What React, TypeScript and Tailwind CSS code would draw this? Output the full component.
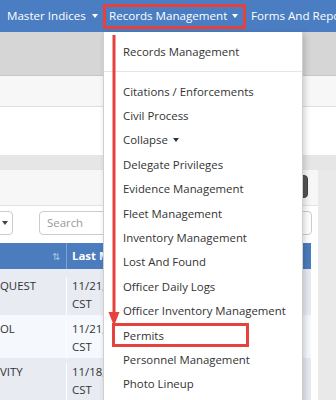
import React from "react";

const menuItems = [
  "Citations / Enforcements",
  "Civil Process",
  "Collapse",
  "Delegate Privileges",
  "Evidence Management",
  "Fleet Management",
  "Inventory Management",
  "Lost And Found",
  "Officer Daily Logs",
  "Officer Inventory Management",
  "Permits",
  "Personnel Management",
  "Photo Lineup",
];

const rows = [
  { name: "QUEST", date: "11/21,", bg: "bg-[#e8ebf2]", pad: "h-[46px] pt-[8px]" },
  { name: "OL", date: "11/21,", bg: "bg-[#f5f8fc]", pad: "h-[43px] pt-[5px]" },
  { name: "VITY", date: "11/18,", bg: "bg-[#e8ebf2]", pad: "h-[43px] pt-[5px]" },
];

function Caret({ className = "" }: { className?: string }) {
  return (
    <span
      className={`inline-block h-0 w-0 border-x-[3.5px] border-t-[4px] border-x-transparent border-t-current ${className}`}
    />
  );
}

export default function App() {
  return (
    <div className="relative h-[400px] w-[336px] overflow-hidden bg-[#e9e9e9] font-['Open_Sans','Noto_Sans',sans-serif] text-[11.4px] text-[#333]">
      <nav className="flex h-[32px] items-center overflow-hidden whitespace-nowrap bg-[#4a7dc1] text-[11.6px] text-white">
        <span className="ml-[7px] flex w-[102px] shrink-0 items-center gap-[6px]">
          Master Indices <Caret />
        </span>
        <span className="flex w-[142px] shrink-0 items-center gap-[5px]">
          Records Management <Caret />
        </span>
        <span className="shrink-0">Forms And Reports</span>
      </nav>

      <div className="h-[44px] border-b border-[#c8c8c8] bg-[#d6d6d6]" />
      <div className="h-[31px] border-b border-[#dedede] bg-[#f7f7f7]" />
      <div className="h-[48px] bg-white" />
      <div className="h-[15px] bg-[#e6e6e6]" />

      <div className="w-[318px] bg-white">
        <div className="flex h-[36px] items-start justify-end border-b border-[#e3e3e3] bg-[#f7f7f7] pr-[10px] pt-[5px]">
          <div className="h-[23px] w-[70px] rounded-[4px] border border-[#444] bg-[#555]" />
        </div>
        <div className="flex h-[37px] items-start pt-[5px]">
          <div className="flex h-[24px] w-[30px] -ml-[17px] items-center justify-end rounded-[4px] border border-[#ccc] pr-[4px] text-[#444]">
            <Caret />
          </div>
          <div className="ml-[26px] flex h-[24px] w-[273px] items-center rounded-[4px] border border-[#ccc] pl-[7px] text-[#999]">
            Search
          </div>
        </div>
        <div className="mr-[7px]">
          <div className="flex h-[26px] items-center bg-[#4a7cbe] font-bold text-white">
            <div className="flex h-full w-[67px] items-center justify-end border-r border-[#7fa3d3] pr-[6px] text-[10px] font-normal text-[#a9c3e6]">
              ⇅
            </div>
            <div className="pl-[5px] whitespace-nowrap">Last Modified</div>
          </div>
          {rows.map((row) => (
            <div key={row.name} className={`flex ${row.bg} ${row.pad} leading-[18px]`}>
              <div className="w-[67px] border-r border-white">{row.name}</div>
              <div className="pl-[5px]">
                <div>{row.date}</div>
                <div>CST</div>
              </div>
            </div>
          ))}
        </div>
      </div>

      <div className="absolute left-[103px] top-[32px] h-[380px] w-[200px] border-l border-r border-[#cfcfcf] bg-white shadow-[2px_2px_6px_rgba(0,0,0,0.18)]">
        <div className="pt-[8px]">
          <div className="flex h-[24px] items-center pl-[19px] whitespace-nowrap">Records Management</div>
          <div className="my-[7px] h-px bg-[#e5e5e5]" />
          {menuItems.map((item) => (
            <div key={item} className="flex h-[24.4px] items-center gap-[5px] pl-[19px] whitespace-nowrap">
              {item}
              {item === "Collapse" && <Caret />}
            </div>
          ))}
        </div>
      </div>

      <div className="absolute left-[103px] top-[4px] h-[25px] w-[143px] border-[3px] border-[#e5413d]" />
      <div className="absolute left-[112px] top-[323px] h-[24px] w-[137px] border-[3px] border-[#e5413d]" />
      <svg className="absolute left-0 top-0" width="336" height="400" viewBox="0 0 336 400">
        <rect x="112.5" y="35" width="3" height="278" fill="#e5413d" />
        <polygon points="108.5,312 119.5,312 114,326" fill="#e5413d" />
      </svg>
    </div>
  );
}
